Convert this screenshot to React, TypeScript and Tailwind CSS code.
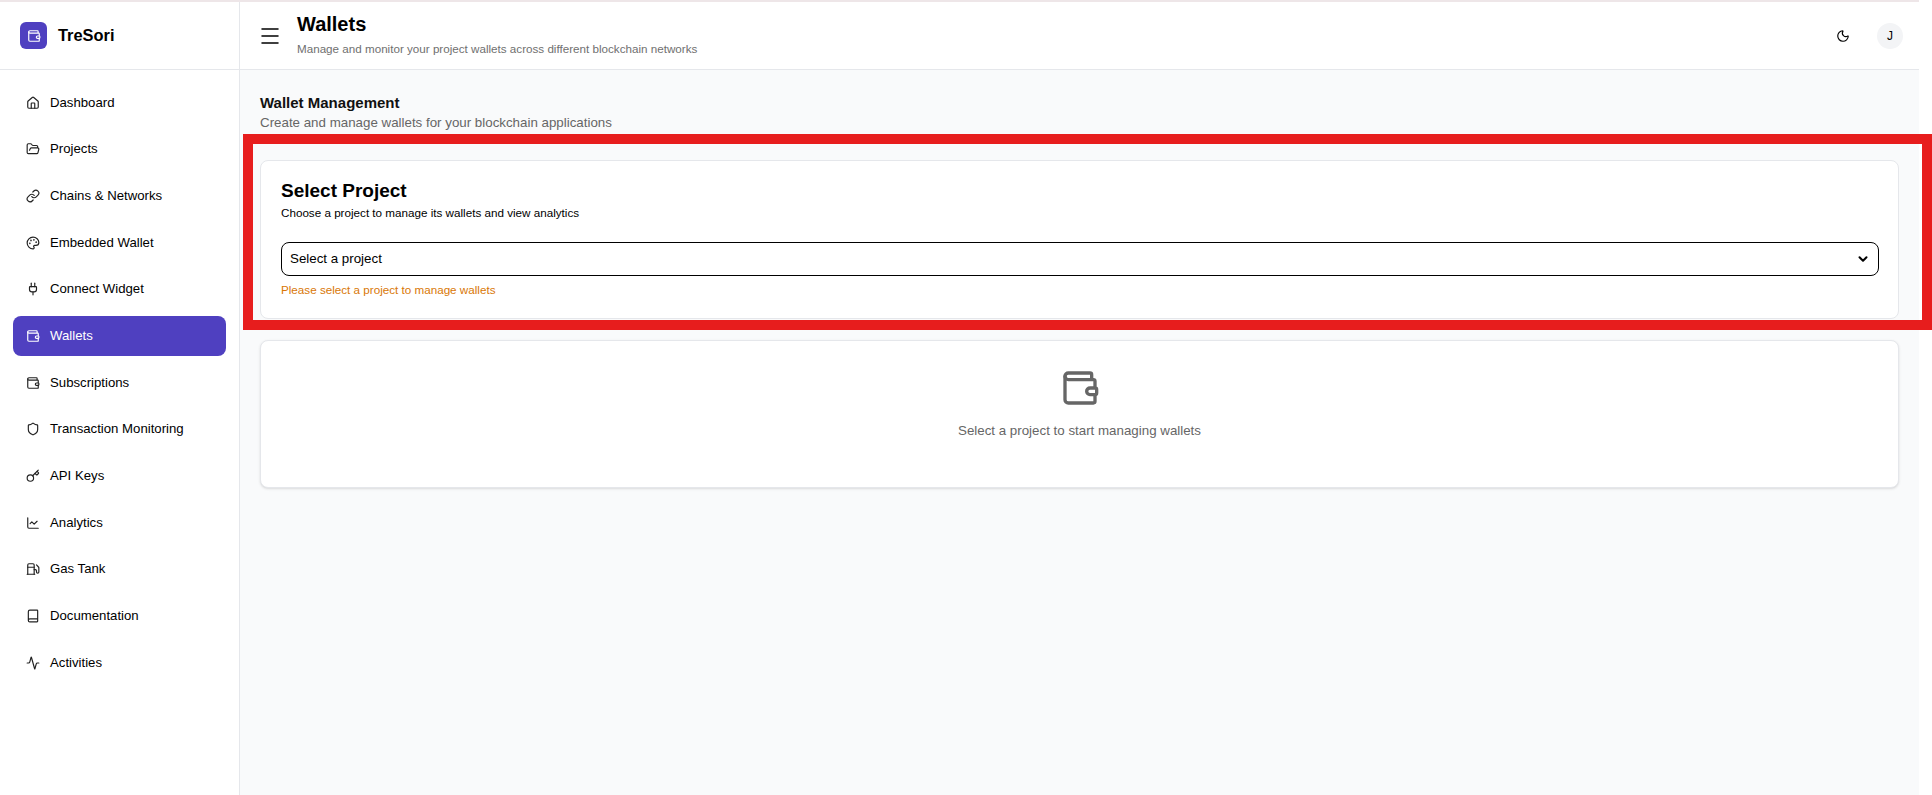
import { Home, FolderOpen, Link, Palette, Plug, Wallet, Shield, Key, ChartLine, Fuel, Book, Activity, Moon, Menu, ChevronDown } from "lucide-react";

const items = [
  { label: "Dashboard", Icon: Home },
  { label: "Projects", Icon: FolderOpen },
  { label: "Chains & Networks", Icon: Link },
  { label: "Embedded Wallet", Icon: Palette },
  { label: "Connect Widget", Icon: Plug },
  { label: "Wallets", Icon: Wallet, active: true },
  { label: "Subscriptions", Icon: Wallet },
  { label: "Transaction Monitoring", Icon: Shield },
  { label: "API Keys", Icon: Key },
  { label: "Analytics", Icon: ChartLine },
  { label: "Gas Tank", Icon: Fuel },
  { label: "Documentation", Icon: Book },
  { label: "Activities", Icon: Activity },
];

export default function App() {
  return (
    <div className="relative h-[795px] w-[1932px] overflow-hidden bg-white font-['Liberation_Sans',Arial,sans-serif] text-black">
      <div className="flex h-full w-[1919px] flex-col">
        <div className="h-[2px] shrink-0 bg-[#eee6e8]" />
        <div className="flex min-h-0 flex-1">
          <aside className="w-[240px] shrink-0 border-r border-[#e5e7eb] bg-white">
            <div className="flex h-[68px] items-center gap-[11px] border-b border-[#e5e7eb] pl-[20px]">
              <div className="flex h-[27px] w-[27px] items-center justify-center rounded-md bg-[#4f40c0] text-white">
                <Wallet size={14} strokeWidth={2} />
              </div>
              <span className="text-[16.4px] font-bold">TreSori</span>
            </div>
            <nav className="flex flex-col gap-[6.7px] px-[13px] pt-[12.5px]">
              {items.map(({ label, Icon, active }) => (
                <div
                  key={label}
                  className={
                    active
                      ? "flex h-[40px] items-center gap-[10px] rounded-lg bg-[#4f40c0] pl-[13px] text-[13.2px] text-white"
                      : "flex h-[40px] items-center gap-[10px] rounded-lg pl-[13px] text-[13.2px] text-black"
                  }
                >
                  <Icon size={14} strokeWidth={2} className={active ? "text-white" : "text-[#222222]"} />
                  <span>{label}</span>
                </div>
              ))}
            </nav>
          </aside>
          <div className="flex min-w-0 flex-1 flex-col">
            <header className="flex h-[68px] shrink-0 items-center border-b border-[#e5e7eb] bg-white pl-[18px] pr-[16px]">
              <Menu size={24} strokeWidth={1.5} className="shrink-0" />
              <div className="ml-[15px] -translate-y-[2px]">
                <h1 className="text-[20px] font-bold leading-[28px]">Wallets</h1>
                <p className="mt-[3px] text-[11.65px] leading-[16px] text-[#6f6f6f]">
                  Manage and monitor your project wallets across different blockchain networks
                </p>
              </div>
              <div className="ml-auto flex items-center gap-[27px]">
                <Moon size={14} strokeWidth={2} />
                <div className="flex h-[26px] w-[26px] items-center justify-center rounded-full bg-[#f3f4f6] text-[12px] font-medium">
                  J
                </div>
              </div>
            </header>
            <main className="min-h-0 flex-1 bg-[#f9fafb] px-[20px] pt-[23px]">
              <h2 className="text-[15px] font-bold leading-[20px] text-[#111111]">Wallet Management</h2>
              <p className="text-[13.33px] leading-[20px] text-[#666666]">
                Create and manage wallets for your blockchain applications
              </p>
              <section className="mt-[27px] h-[159px] rounded-lg border border-[#e5e7eb] bg-white pl-[20px] pr-[19px] pt-[20px]">
                <h3 className="text-[19px] font-bold leading-[20px]">Select Project</h3>
                <p className="mt-[4px] text-[11.66px] leading-[16px]">
                  Choose a project to manage its wallets and view analytics
                </p>
                <div className="relative mt-[21px]">
                  <select className="block h-[34px] w-full appearance-none rounded-lg border border-black bg-white pl-[8px] pr-[6px] text-[13.33px]">
                    <option>Select a project</option>
                  </select>
                  <ChevronDown size={14} strokeWidth={3.5} className="pointer-events-none absolute right-[9px] top-[10px]" />
                </div>
                <p className="mt-[6px] text-[11.66px] leading-[16px] text-[#d97706]">
                  Please select a project to manage wallets
                </p>
              </section>
              <section className="mt-[21px] flex h-[148px] flex-col items-center rounded-lg border border-[#e5e7eb] bg-white pt-[27px] shadow-sm">
                <Wallet size={40} strokeWidth={2} className="text-[#666666]" />
                <p className="mt-[13px] text-[13.33px] leading-[20px] text-[#666666]">
                  Select a project to start managing wallets
                </p>
              </section>
            </main>
          </div>
        </div>
      </div>
      <div className="pointer-events-none absolute left-[243px] top-[134px] h-[196px] w-[1689px] border-[10px] border-[#e71d1d]" />
    </div>
  );
}
